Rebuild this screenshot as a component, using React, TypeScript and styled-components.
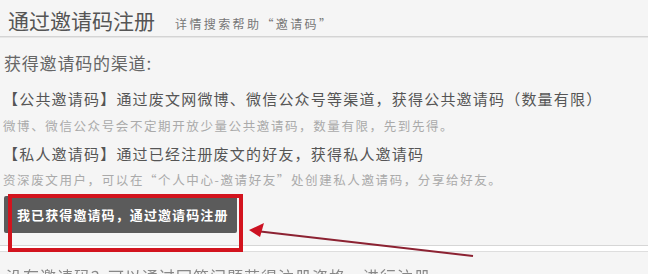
import styled, { createGlobalStyle } from 'styled-components';

const GlobalStyle = createGlobalStyle`
    html, body {
        margin: 0;
        padding: 0;
        background: #f5f5f5;
        overflow: hidden;
    }
    body {
        font-family: "Noto Sans CJK SC", "Noto Sans", sans-serif;
    }
`;

const StyledPage = styled.div`
    position: relative;
    width: 648px;
    height: 274px;
    overflow: hidden;
    background: #f5f5f5;
    color: #555;
`;

const Header = styled.div`
    display: flex;
    align-items: baseline;
    gap: 20px;
    padding: 6px 8px 2px;
    border-bottom: 1px solid #d4d4d4;
    box-shadow: 0 1px 0 #e6e6e6;
`;

const Title = styled.h1`
    margin: 0;
    font-size: 21px;
    line-height: 28px;
    font-weight: 400;
    color: #555;
`;

const Hint = styled.span`
    font-size: 12px;
    letter-spacing: 2.4px;
    color: #777;
`;

const Body = styled.div`
    display: flex;
    flex-direction: column;
    padding: 0 3px;
`;

const SectionTitle = styled.h2`
    margin: 14px 0 0 1px;
    font-size: 17px;
    line-height: 24px;
    font-weight: 400;
    letter-spacing: 0.8px;
    color: #666;
`;

const Channel = styled.p<{ $gap: number }>`
    margin: ${(p) => p.$gap}px 0 0;
    font-size: 15px;
    line-height: 24px;
    letter-spacing: 1.2px;
    color: #555;
`;

const Note = styled.p<{ $gap: number }>`
    margin: ${(p) => p.$gap}px 0 0;
    font-size: 12.5px;
    line-height: 20px;
    letter-spacing: 1.6px;
    color: #aaa;
`;

const ButtonWrap = styled.div`
    position: relative;
    align-self: flex-start;
    margin: 6px 0 0 1px;
`;

const RegisterButton = styled.button`
    display: block;
    width: 233px;
    height: 37px;
    padding: 0 0 0 13px;
    border: 0;
    border-radius: 2px;
    background: #5b5b5b;
    color: #fff;
    font-family: inherit;
    font-size: 13px;
    font-weight: 700;
    letter-spacing: 1.1px;
    text-align: left;
    cursor: pointer;
`;

const RedFrame = styled.div`
    position: absolute;
    left: 4px;
    top: -2px;
    width: 227px;
    height: 50px;
    border: 4px solid #d3141e;
    pointer-events: none;
`;

const Divider = styled.div`
    margin-top: 12px;
    height: 5px;
    background: #fff;
    border-top: 1px solid #d6d6d6;
    border-bottom: 1px solid #dedede;
`;

const Footer = styled.p`
    margin: 12px 0 0;
    padding: 0 6px;
    font-size: 16px;
    line-height: 24px;
    letter-spacing: 1px;
    color: #888;
    filter: blur(0.6px);
`;

const Arrow = styled.svg`
    position: absolute;
    left: 0;
    top: 0;
    pointer-events: none;
`;

const App = () => {
    return (
        <StyledPage>
            <GlobalStyle />
            <Header>
                <Title>通过邀请码注册</Title>
                <Hint>详情搜索帮助“邀请码”</Hint>
            </Header>
            <Body>
                <SectionTitle>获得邀请码的渠道:</SectionTitle>
                <Channel $gap={12}>【公共邀请码】通过废文网微博、微信公众号等渠道，获得公共邀请码（数量有限）</Channel>
                <Note $gap={5}>微博、微信公众号会不定期开放少量公共邀请码，数量有限，先到先得。</Note>
                <Channel $gap={6}>【私人邀请码】通过已经注册废文的好友，获得私人邀请码</Channel>
                <Note $gap={4}>资深废文用户，可以在“个人中心-邀请好友”处创建私人邀请码，分享给好友。</Note>
                <ButtonWrap>
                    <RegisterButton>我已获得邀请码，通过邀请码注册</RegisterButton>
                    <RedFrame />
                </ButtonWrap>
            </Body>
            <Divider />
            <Footer>没有邀请码？可以通过回答问题获得注册资格，进行注册</Footer>
            <Arrow width='648' height='274' viewBox='0 0 648 274'>
                <line x1='473' y1='256' x2='256' y2='231' stroke='#8c2232' strokeWidth='2' />
                <polygon points='249,230 264,223 260,237' fill='#cc1222' />
            </Arrow>
        </StyledPage>
    );
};

export default App;
